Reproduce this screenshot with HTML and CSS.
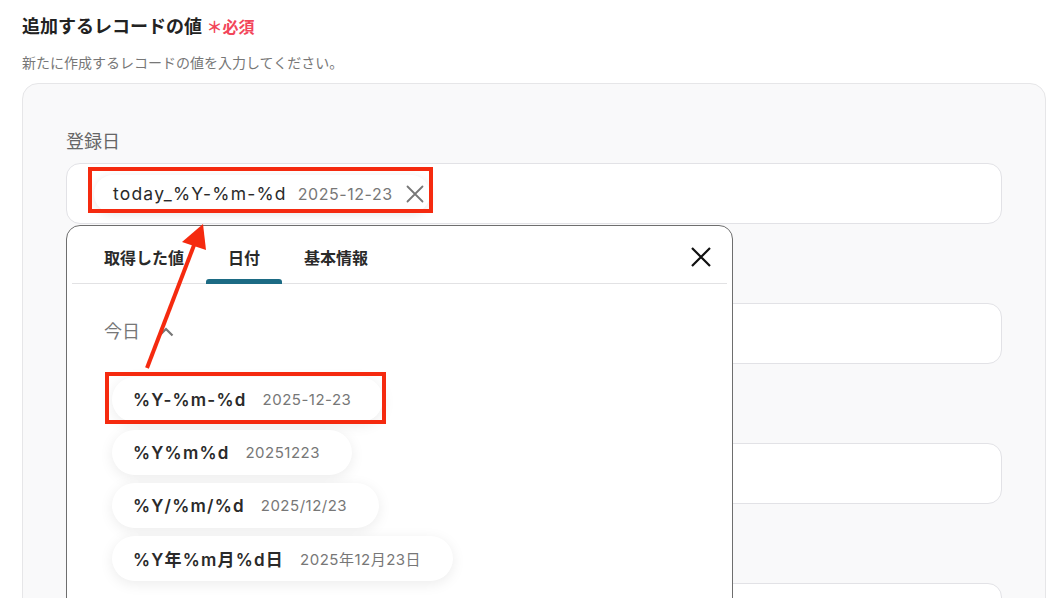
FILE: index.html
```html
<!DOCTYPE html>
<html lang="ja">
<head>
<meta charset="utf-8">
<link rel="stylesheet" href="styles.css">
</head>
<body>
<div class="page">
  <div class="head">
    <h2 class="title">追加するレコードの値 <span class="req">＊必須</span></h2>
    <p class="desc">新たに作成するレコードの値を入力してください。</p>
  </div>
  <div class="panel">
    <div class="field">
      <div class="label">登録日</div>
      <div class="input">
        <div class="chip">
          <span class="chip-key">today_%Y-%m-%d</span>
          <span class="chip-val">2025-12-23</span>
          <svg class="chip-x" width="18" height="18" viewBox="0 0 18 18"><path d="M1.5 1.5L16.5 16.5M16.5 1.5L1.5 16.5" stroke="#777" stroke-width="1.8" stroke-linecap="round"/></svg>
        </div>
        <div class="hl hl-chip"></div>
      </div>
    </div>
    <div class="field">
      <div class="label">項目</div>
      <div class="input"></div>
    </div>
    <div class="field">
      <div class="label">項目</div>
      <div class="input"></div>
    </div>
    <div class="field">
      <div class="label">項目</div>
      <div class="input"></div>
    </div>

    <div class="popup">
      <div class="tabs">
        <div class="tab">取得した値</div>
        <div class="tab active">日付</div>
        <div class="tab">基本情報</div>
        <svg class="close" width="22" height="22" viewBox="0 0 22 22"><path d="M2 2L20 20M20 2L2 20" stroke="#111" stroke-width="2.2"/></svg>
      </div>
      <div class="body">
        <div class="group">
          <span>今日</span>
          <svg width="16" height="10" viewBox="0 0 16 10"><path d="M1.5 8.5L8 2L14.5 8.5" fill="none" stroke="#777" stroke-width="2.2"/></svg>
        </div>
        <div class="items">
          <div class="item"><span class="key">%Y-%m-%d</span><span class="val">2025-12-23</span><div class="hl hl-item"></div></div>
          <div class="item"><span class="key">%Y%m%d</span><span class="val">20251223</span></div>
          <div class="item"><span class="key">%Y/%m/%d</span><span class="val">2025/12/23</span></div>
          <div class="item"><span class="key">%Y年%m月%d日</span><span class="val">2025年12月23日</span></div>
        </div>
      </div>
    </div>
  </div>
  <svg class="arrow" width="1050" height="598" viewBox="0 0 1050 598">
    <line x1="147" y1="368" x2="196" y2="240" stroke="#f52a0f" stroke-width="4"/>
    <polygon points="203,224 182,242 206,250" fill="#f52a0f"/>
  </svg>
</div>
</body>
</html>
```

FILE: styles.css
```css
html, body {
  margin: 0;
  padding: 0;
  background: #ffffff;
  overflow: hidden;
}
body {
  font-family: "Inter", "Noto Sans CJK JP", sans-serif;
  color: #222;
  width: 1050px;
  height: 598px;
}
.page {
  position: relative;
  width: 1050px;
  height: 598px;
  overflow: hidden;
}
.head {
  padding: 15px 0 0 22px;
}
.title {
  margin: 0;
  font-size: 18px;
  line-height: 24px;
  font-weight: 600;
  color: #222;
}
.req {
  color: #f2455a;
  font-size: 16px;
  font-weight: 600;
}
.desc {
  margin: 14px 0 0;
  font-size: 14px;
  line-height: 20px;
  color: #777;
}
.panel {
  position: relative;
  margin: 10px 4px 0 22px;
  height: 600px;
  background: #f9f9fa;
  border: 1px solid #e6e6e8;
  border-radius: 16px;
  padding: 46px 43px 0 43px;
  box-sizing: border-box;
  display: flex;
  flex-direction: column;
  gap: 46px;
}
.field {
  display: flex;
  flex-direction: column;
  gap: 9px;
}
.label {
  font-size: 18px;
  line-height: 24px;
  color: #666;
}
.input {
  position: relative;
  height: 61px;
  box-sizing: border-box;
  background: #fff;
  border: 1px solid #e2e2e6;
  border-radius: 14px;
  display: flex;
  align-items: center;
  padding-left: 27px;
}
.chip {
  display: flex;
  align-items: center;
  height: 38px;
  padding: 0 6px 0 19px;
  border-radius: 19px;
  background: #fff;
  box-shadow: 0 2px 10px rgba(0, 0, 0, 0.09);
}
.chip-key {
  font-size: 17.5px;
  color: #2a2a2a;
  letter-spacing: 1.2px;
}
.chip-val {
  font-size: 16px;
  color: #777;
  margin-left: 11px;
  letter-spacing: 0.55px;
}
.chip-x {
  margin-left: 13px;
}
.hl {
  position: absolute;
  border: 4px solid #f52a0f;
  box-sizing: border-box;
  pointer-events: none;
}
.hl-chip {
  left: 21px;
  top: 3px;
  width: 345px;
  height: 46px;
}
.popup {
  position: absolute;
  left: 43px;
  top: 141px;
  width: 667px;
  height: 400px;
  box-sizing: border-box;
  background: #fff;
  border: 1.5px solid #6e6e6e;
  border-radius: 14px 14px 0 0;
}
.tabs {
  position: relative;
  display: flex;
  margin: 0 5px;
  padding-left: 10px;
  height: 57px;
  border-bottom: 1px solid #e2e2e4;
}
.tab {
  position: relative;
  padding: 21px 22px 0;
  font-size: 16px;
  font-weight: 600;
  color: #2a2a2a;
  line-height: 22px;
  box-sizing: border-box;
  height: 57px;
}
.tab.active::after {
  content: "";
  position: absolute;
  left: 0;
  right: 0;
  bottom: -1px;
  height: 5px;
  background: #1c6b84;
  border-radius: 3px 3px 0 0;
}
.close {
  position: absolute;
  right: 15px;
  top: 20px;
}
.body {
  padding: 36px 0 0 37px;
}
.group {
  display: flex;
  align-items: center;
  gap: 18px;
  font-size: 18px;
  line-height: 24px;
  color: #777;
}
.items {
  margin-top: 33px;
  margin-left: 8px;
  display: flex;
  flex-direction: column;
  align-items: flex-start;
  gap: 8px;
}
.item {
  position: relative;
  height: 45px;
  display: flex;
  align-items: center;
  padding: 0 32px 0 21px;
  border-radius: 23px;
  background: #fff;
  box-shadow: 0 3px 14px rgba(0, 0, 0, 0.08);
}
.key {
  font-size: 17px;
  font-weight: 600;
  color: #2a2a2a;
  letter-spacing: 1.2px;
}
.val {
  font-size: 15px;
  color: #777;
  margin-left: 16px;
  letter-spacing: 0.5px;
}
.hl-item {
  left: -7px;
  top: -5px;
  width: 281px;
  height: 52px;
}
.arrow {
  position: absolute;
  left: 0;
  top: 0;
  pointer-events: none;
}
```
